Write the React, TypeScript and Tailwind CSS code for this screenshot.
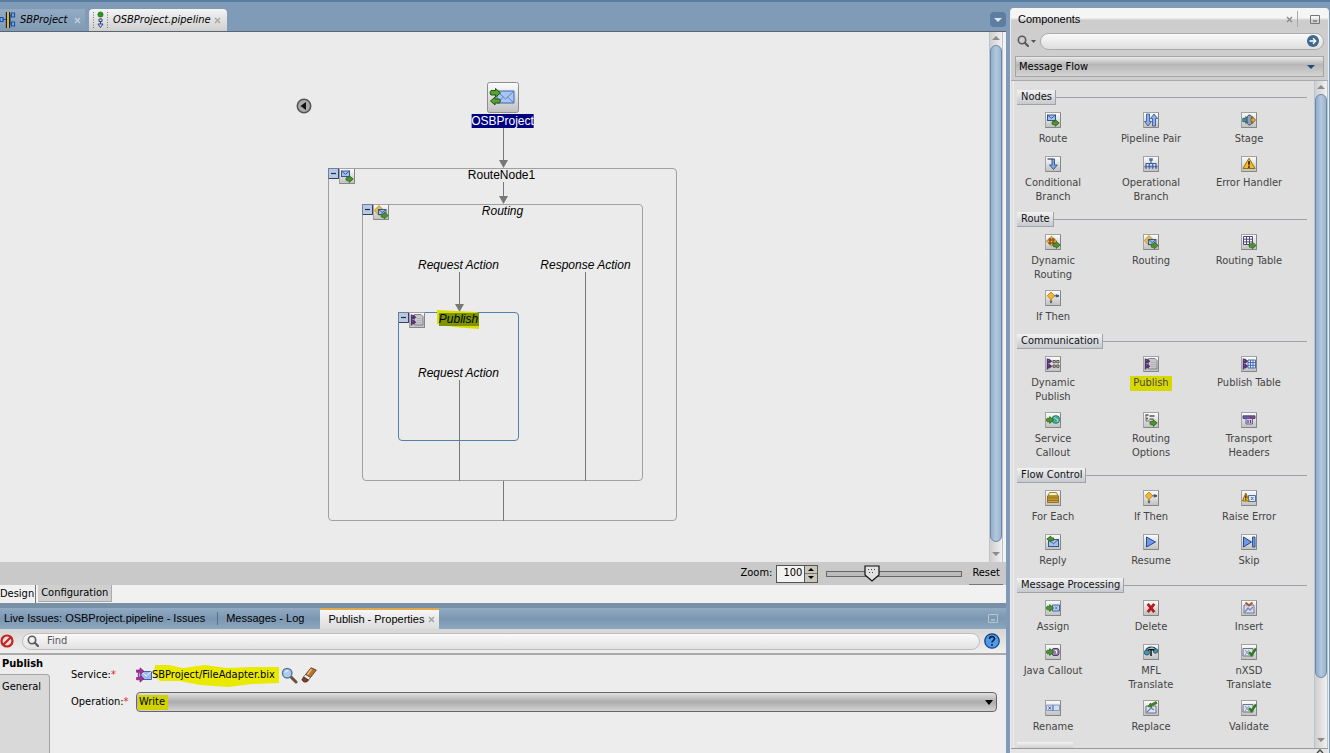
import React, { useState } from "react";

const UI = "font-['DejaVu_Sans_Condensed','DejaVu_Sans','Noto_Sans',sans-serif]";
const ARIAL = "font-['Liberation_Sans',Arial,sans-serif]";

type Glyph = React.ReactNode;

const greenArrow = (x: number, y: number) => (
  <path
    transform={`translate(${x} ${y})`}
    d="M.8 1.300h2.400V-.4L7.200 3l-4 3.400V4.800H.8C-.3 4.800-.3 1.300.8 1.300z"
    fill="#4d9430"
    stroke="#2c6418"
    strokeWidth=".8"
    strokeLinejoin="round"
  />
);
const purpleBolt = (
  <path d="M2.500 2.500v11M2 5.200h4M3.500 3.200l2.700 2-2.700 2M2 10.200h4M3.500 8.200l2.700 2-2.700 2" fill="none" stroke="#553070" strokeWidth="1.500" />
);
const envelope = (x: number, y: number, w: number, h: number) => (
  <g transform={`translate(${x} ${y})`}>
    <rect width={w} height={h} fill="#a4c1ee" stroke="#34568f" strokeWidth="1" />
    <path d={`M0 0L${w / 2} ${h * 0.6}L${w} 0`} fill="none" stroke="#34568f" strokeWidth=".9" />
  </g>
);
const check = <path d="M8 8l2.500 3L15 4.500" fill="none" stroke="#2c7d20" strokeWidth="2.400" />;
const ifThen = (
  <>
    <path d="M6 2L9.800 5.800 6 9.600 2.200 5.800z" fill="#f0b733" stroke="#b07d18" strokeWidth=".8" strokeLinejoin="round" />
    <path d="M9.500 5.800h2M6 9.500v3" stroke="#555" strokeWidth="1" />
    <path d="M10.800 4.300L14 5v1.800l-3.200.6zM4.500 11.300h3L6 13.800z" fill="#3d5680" />
    <path d="M6 10v2" stroke="#b56a20" strokeWidth="1.200" />
  </>
);

const glyphs: Record<string, Glyph> = {
  route: (
    <>
      {envelope(2.5, 3, 8, 5.5)}
      {greenArrow(7, 8)}
    </>
  ),
  pair: (
    <>
      <path d="M3.500 2h3v7.500H8.500L5 14 1.500 9.500h2z" fill="#8fb0e4" stroke="#3a5d9c" strokeWidth=".9" />
      <path d="M9.500 14h3V6.500h2L11 2 7.500 6.500h2z" fill="#8fb0e4" stroke="#3a5d9c" strokeWidth=".9" />
    </>
  ),
  stage: (
    <>
      <path d="M1.800 6.300h3V4.500l3 3.500-3 3.500V9.700h-3z" fill="#36969c" stroke="#1b5d66" strokeWidth=".8" />
      <ellipse cx="8.500" cy="8" rx="2.600" ry="5" fill="#8fa0bd" stroke="#394a62" strokeWidth="1" />
      <path d="M10 6.300h1.500V4.500l3 3.500-3 3.500V9.700H10z" fill="#d9a93c" stroke="#7a5a17" strokeWidth=".8" />
    </>
  ),
  cond: (
    <>
      <path d="M2.500 3h5" stroke="#222" strokeWidth="1.200" />
      <path d="M7 3h2.500v6h2.800L8.500 13.500 4.500 9H7z" fill="#7fa5df" stroke="#2c5090" strokeWidth=".9" />
    </>
  ),
  oper: (
    <>
      <path d="M8 4v4M3 11V7.500h10V11M6.300 11V8M9.700 11V8" fill="none" stroke="#3a5d9c" strokeWidth="1.100" />
      <path d="M6.500 2.500h3v2h-3zM1.500 10h3L3 13zM5 10h2.800L6.400 13zM8.300 10h2.800l-1.400 3zM11.500 10h3L13 13z" fill="#4a77c2" stroke="#24498f" strokeWidth=".4" />
    </>
  ),
  error: (
    <>
      <path d="M8 2.200L14 12.500H2z" fill="#f0bd28" stroke="#96700c" strokeWidth="1" strokeLinejoin="round" />
      <path d="M7 5.200h2L8.600 9.500H7.400zM7.100 10.200h1.800v1.500H7.100z" fill="#222" />
    </>
  ),
  dynRoute: (
    <>
      <path d="M6.500 2.200L11.800 7.200 6.500 12 1.500 7.200z" fill="#edb63c" stroke="#9a6b14" strokeWidth=".7" strokeLinejoin="round" />
      <path d="M4 4.800h2v2H4zM7.200 4.800h2v2h-2zM4 8h2v2H4zM7.200 8h2v2h-2z" fill="#c58a3c" stroke="#7a3a22" strokeWidth=".8" />
      {greenArrow(8, 8)}
    </>
  ),
  routing: (
    <>
      <path d="M6 1.500L11 6.500 6 11.500 1.200 6.500z" fill="#e9b944" stroke="#b4852a" strokeWidth=".8" strokeLinejoin="round" />
      {envelope(5.5, 5.5, 7.5, 5)}
      {greenArrow(8, 8.5)}
    </>
  ),
  routeTable: (
    <>
      <path d="M2.500 2.500h9v8h-9zM2.500 5.200h9M2.500 7.900h9M5.500 2.500v8M8.500 2.500v8" fill="#fff" stroke="#51457a" strokeWidth="1" />
      {greenArrow(8, 8.5)}
    </>
  ),
  ifThen,
  dynPublish: (
    <>
      {purpleBolt}
      <path d="M8 4.500h2.300v2.300H8zM11.700 4.500H14v2.300h-2.300zM8 9h2.300v2.300H8zM11.700 9H14v2.300h-2.300z" fill="#e2d8a8" stroke="#444" strokeWidth=".9" />
    </>
  ),
  publish: (
    <>
      <path d="M5.500 2.500h6.500L14 4.500V13H5.500z" fill="#c6c6cd" stroke="#77777f" strokeWidth=".9" />
      <path d="M8 6.500h4.500M8 8.500h4.500M8 10.500h4.500" stroke="#a9a9b2" strokeWidth=".7" />
      {purpleBolt}
    </>
  ),
  publishTable: (
    <>
      {purpleBolt}
      <path d="M7 4h7.500v8H7zM7 6.600h7.500M7 9.300h7.500M9.500 4v8M12 4v8" fill="#e8eefb" stroke="#3c62a8" strokeWidth=".9" />
    </>
  ),
  callout: (
    <>
      <circle cx="10.800" cy="7.500" r="3.900" fill="#45ab94" stroke="#1f6c7a" strokeWidth=".8" />
      <path d="M9.500 5.500c1.500 0 1 2 2.500 2s1 2 0 2.500" stroke="#c6f0e4" fill="none" strokeWidth=".9" />
      {greenArrow(1.5, 5)}
    </>
  ),
  options: (
    <>
      <path d="M2.500 3h3M6.500 4h5M3 6.500h2M6.500 7.200h4" stroke="#555" strokeWidth="1.300" />
      <path d="M3 3v6h4" fill="none" stroke="#666" strokeWidth=".9" />
      {greenArrow(7, 8)}
    </>
  ),
  headers: (
    <>
      <path d="M2 3.800h12v2.700H2z" fill="#7a5aa0" stroke="#3f2c6b" strokeWidth=".8" />
      <path d="M5 6.500h6.500V12H5z" fill="#c3d3f0" stroke="#3c62a8" strokeWidth=".9" />
      <path d="M9 4.500l2.500 2M7 8v3M9.500 8v3" stroke="#a32c3a" strokeWidth="1.200" />
    </>
  ),
  forEach: (
    <>
      <path d="M4.500 2.500h7l1.500 3.500H3z" fill="#fff0b8" stroke="#8b6a1b" strokeWidth=".8" />
      <path d="M2.500 6h11v6.500h-11z" fill="#d9a432" stroke="#8b6a1b" strokeWidth=".9" />
      <path d="M3 8h10M3 10.300h10" stroke="#7d5c12" strokeWidth=".9" />
    </>
  ),
  raise: (
    <>
      <path d="M7.500 5.500h7v6h-7z" fill="#dbe6f8" stroke="#3c62a8" strokeWidth=".9" />
      <path d="M10 7l2.500 3M12.500 7L10 10" stroke="#3c62a8" strokeWidth=".8" />
      <path d="M4.800 3L8.200 11H1.500z" fill="#f0bd28" stroke="#8a640a" strokeWidth=".9" />
      <path d="M4.800 5.500v3M4.800 9.200v1" stroke="#222" strokeWidth="1.200" />
    </>
  ),
  reply: (
    <>
      {envelope(3.5, 5.5, 10, 7)}
      <path d="M8.500 3.800H5.800V2L1.800 5l4 3V6.400h2.700z" fill="#4d9430" stroke="#2c6418" strokeWidth=".8" strokeLinejoin="round" />
    </>
  ),
  resume: <path d="M3.500 3l9 5-9 5z" fill="#6d9be6" stroke="#24498f" strokeWidth="1" strokeLinejoin="round" />,
  skip: (
    <>
      <path d="M2.500 3l8 5-8 5z" fill="#6d9be6" stroke="#24498f" strokeWidth="1" strokeLinejoin="round" />
      <path d="M11.500 3H14v10h-2.500z" fill="#6d9be6" stroke="#24498f" strokeWidth=".9" />
    </>
  ),
  assign: (
    <>
      <path d="M7.500 5h7v6h-7z" fill="#bfd5f5" stroke="#3c62a8" strokeWidth="1" />
      <path d="M10 6.500l2.500 3M12.500 6.500L10 9.500" stroke="#3c62a8" strokeWidth=".8" />
      {greenArrow(1.5, 5)}
    </>
  ),
  del: <path d="M4.700 3.800l6.600 8.400M11.300 3.800l-6.600 8.400" stroke="#b51c1c" strokeWidth="2.800" />,
  insert: (
    <>
      <path d="M3 5h10v8H3z" fill="#d7ddf0" stroke="#6a6f95" strokeWidth=".9" />
      <path d="M4 12l3-4 2 2 3-3" fill="none" stroke="#7a86b5" strokeWidth="1.400" />
      <path d="M4.500 2.500L8 5.500l3.500-3" fill="none" stroke="#a8572c" strokeWidth="1.900" />
    </>
  ),
  java: (
    <>
      <rect x="7" y="4.500" width="7" height="7" rx="2" fill="#9184a8" stroke="#4b3d6b" strokeWidth="1" />
      <path d="M10 6.500h1.500v3" fill="none" stroke="#fff" strokeWidth=".9" />
      {greenArrow(1.5, 5)}
    </>
  ),
  mfl: (
    <>
      <circle cx="3.900" cy="8.500" r="2.600" fill="#3a9aa8" stroke="#1b4d66" strokeWidth=".8" />
      <circle cx="12.500" cy="7" r="2.300" fill="#3a9aa8" stroke="#1b4d66" strokeWidth=".8" />
      <path d="M3 6c1.500-3.500 8-4 10-1" fill="none" stroke="#1b4d66" strokeWidth="1.200" />
      <path d="M5.500 5.500h5v1.300M5.500 5.500v1.300M8 5.500V12" stroke="#111" strokeWidth="1.500" fill="none" />
    </>
  ),
  validate: (
    <>
      <path d="M2 4.500h10V12H2z" fill="#dfe3ee" stroke="#6b7186" strokeWidth="1" />
      <path d="M4 6l4 5M8 6l-4 5" stroke="#8a93b3" strokeWidth="1" />
      {check}
    </>
  ),
  rename: (
    <>
      <path d="M1.500 5h13v5.500h-13z" fill="#d0dff6" stroke="#7f95bb" strokeWidth=".9" />
      <path d="M3.500 6.500l2.500 3M6 6.500l-2.500 3M8 5v5.500" stroke="#2f4f8f" strokeWidth=".9" />
    </>
  ),
  replace: (
    <>
      <path d="M3 6h10v7H3z" fill="#dfe4f0" stroke="#6b7186" strokeWidth="1" />
      <path d="M4 12l4-4 3 2" stroke="#6a7db0" strokeWidth="1.300" fill="none" />
      <path d="M13 1.500L7.500 4.500V3L5 6.500l4 .8-.8-1.300L14 3.500z" fill="#3c8f28" stroke="#2c6418" strokeWidth=".8" />
    </>
  ),
};

function NodeIcon({ name }: { name: string }) {
  return (
    <svg viewBox="0 0 16 16" className="block size-4 shrink-0" aria-hidden="true">
      <defs>
        <linearGradient id="tile" x1="0" y1="0" x2="0" y2="1">
          <stop offset="0" stopColor="#fdfdfd" />
          <stop offset="1" stopColor="#c0c0c0" />
        </linearGradient>
      </defs>
      <rect x=".5" y=".5" width="15" height="15" fill="url(#tile)" stroke="#a2a2a2" />
      <path d="M.5 15.500h15V1" fill="none" stroke="#868686" />
      {glyphs[name]}
    </svg>
  );
}

const groups: { title: string; items: [string, string[]][] }[] = [
  {
    title: "Nodes",
    items: [
      ["route", ["Route"]],
      ["pair", ["Pipeline Pair"]],
      ["stage", ["Stage"]],
      ["cond", ["Conditional", "Branch"]],
      ["oper", ["Operational", "Branch"]],
      ["error", ["Error Handler"]],
    ],
  },
  {
    title: "Route",
    items: [
      ["dynRoute", ["Dynamic", "Routing"]],
      ["routing", ["Routing"]],
      ["routeTable", ["Routing Table"]],
      ["ifThen", ["If Then"]],
    ],
  },
  {
    title: "Communication",
    items: [
      ["dynPublish", ["Dynamic", "Publish"]],
      ["publish", ["Publish"]],
      ["publishTable", ["Publish Table"]],
      ["callout", ["Service", "Callout"]],
      ["options", ["Routing", "Options"]],
      ["headers", ["Transport", "Headers"]],
    ],
  },
  {
    title: "Flow Control",
    items: [
      ["forEach", ["For Each"]],
      ["ifThen", ["If Then"]],
      ["raise", ["Raise Error"]],
      ["reply", ["Reply"]],
      ["resume", ["Resume"]],
      ["skip", ["Skip"]],
    ],
  },
  {
    title: "Message Processing",
    items: [
      ["assign", ["Assign"]],
      ["del", ["Delete"]],
      ["insert", ["Insert"]],
      ["java", ["Java Callout"]],
      ["mfl", ["MFL", "Translate"]],
      ["validate", ["nXSD", "Translate"]],
      ["rename", ["Rename"]],
      ["replace", ["Replace"]],
      ["validate", ["Validate"]],
    ],
  },
];

function Close({ className }: { className: string }) {
  return (
    <svg viewBox="0 0 7 7" className={`size-[7px] ${className}`} aria-hidden="true">
      <path d="M1 1l5 5M6 1L1 6" stroke="currentColor" strokeWidth="1.400" />
    </svg>
  );
}

function Minimize({ className }: { className: string }) {
  return (
    <svg viewBox="0 0 10 9" className={`h-[9px] w-[10px] ${className}`} aria-hidden="true">
      <path d="M.5.5h9v8h-9z" fill="none" stroke="currentColor" />
      <path d="M3 6h4" stroke="currentColor" strokeWidth="1.500" />
    </svg>
  );
}

function ScrollColumn({ tail }: { tail: string }) {
  return (
    <div className="flex w-[14px] shrink-0 flex-col items-center border-x border-[#b9c4cd] bg-linear-to-r from-[#cfcfcf] to-[#f0f0f0]" aria-hidden="true">
      <svg viewBox="0 0 8 13" className="h-[13px] w-2 shrink-0">
        <path d="M4 4l4 4H0z" fill="#8b8b8b" />
      </svg>
      <div className="w-3 flex-1 rounded-full border border-[#6b8aa8] bg-linear-to-r from-[#8fadcb] via-[#b4c8dd] to-[#9ab4ce]" />
      <div className={`flex shrink-0 items-end ${tail}`}>
        <svg viewBox="0 0 8 12" className="h-3 w-2">
          <path d="M4 6L0 2h8z" fill="#8b8b8b" />
        </svg>
      </div>
    </div>
  );
}

function Search({ className }: { className: string }) {
  return (
    <svg viewBox="0 0 12 12" className={className} aria-hidden="true">
      <circle cx="5" cy="5" r="3.700" fill="none" stroke="#5a5a5a" strokeWidth="1.600" />
      <path d="M7.800 7.800L11 11" stroke="#5a5a5a" strokeWidth="2.200" strokeLinecap="round" />
    </svg>
  );
}

function EditorTabs() {
  return (
    <div className={`flex h-6 shrink-0 items-end border-b border-[#5b6470] text-[11px] italic ${UI}`}>
      <button className="flex h-[22px] items-center bg-linear-to-b from-[#93abc3] to-[#7f9ab4] pr-1">
        <svg viewBox="0 0 16 16" className="size-4" aria-hidden="true">
          <path d="M0 5.500h3v4H0zM11.500 1h3v4h-3zM11.500 10h3v4h-3z" fill="#7fb0f0" stroke="#1c4fa0" strokeWidth="1.200" />
          <path d="M3 7.500h3M10 3h2M10 12h2M10 3v9" stroke="#1c4fa0" strokeWidth="1.200" />
          <path d="M6.500 0v16M9.500 0v16" stroke="#222" strokeWidth="1.300" />
          <path d="M8 0v16" stroke="#e8c33a" strokeWidth="1.500" />
        </svg>
        <span className="ml-1 w-[54px] text-left">SBProject</span>
        <Close className="text-[#c3d0dc]" />
      </button>
      <button className="ml-1 flex h-[22px] items-center rounded-t bg-linear-to-b from-[#f4f4f4] to-[#cfcfcf] pr-1.5 pl-[3px]">
        <svg viewBox="0 0 17 18" className="h-[18px] w-[17px]" aria-hidden="true">
          <path d="M1.500 1v16M15.500 1v16" stroke="#777" strokeDasharray="1 1.500" />
          <circle cx="8.500" cy="3.500" r="2.600" fill="#2a9a1f" stroke="#1a5e12" strokeWidth=".6" />
          <path d="M7 8h3v2.500H7zM8.500 11v2M6 13h5l-2.500 3.500z" fill="#dfe8fb" stroke="#28407e" />
        </svg>
        <span className="ml-1 w-[101px] text-left">OSBProject.pipeline</span>
        <Close className="text-[#a8a8a8]" />
      </button>
      <button aria-label="Open documents" className="mb-1 ml-auto flex h-[15px] w-4 items-center justify-center rounded-sm bg-[#5d7ea0]">
        <svg viewBox="0 0 8 4" className="h-1 w-2"><path d="M0 0h8L4 4z" fill="#dfe8f0" /></svg>
      </button>
    </div>
  );
}

function Collapse({ className }: { className: string }) {
  return (
    <button aria-label="Collapse" className={`absolute ${className}`}>
      <svg viewBox="0 0 11 11" className="block size-[11px]">
        <rect x=".5" y=".5" width="10" height="10" fill="#b9c9e2" stroke="#6c7f9f" />
        <path d="M1 10.500h9.500V1" fill="none" stroke="#33415c" />
        <path d="M3 5.500h5" stroke="#1f2f55" strokeWidth="1.200" />
      </svg>
    </button>
  );
}

const LABEL = `absolute -translate-x-1/2 whitespace-nowrap text-xs leading-[14px] text-black`;

function Diagram() {
  return (
    <div className={`relative h-[440px] w-[414px] shrink-0 ${ARIAL}`}>
      <div className="absolute top-[86px] left-8 h-[353px] w-[349px] rounded border border-[#a0a0a0]" />
      <div className="absolute top-[122px] left-[66px] h-[277px] w-[281px] rounded border border-[#a0a0a0]" />
      <div className="absolute top-[230px] left-[102px] h-[129px] w-[121px] rounded border border-[#5580ae]" />
      <svg viewBox="0 0 414 440" className="absolute inset-0 h-full w-full" aria-hidden="true">
        <path d="M207.500 46v36M207.500 100v18M163.500 190v36M163.500 298v101M289.500 190v209M207.500 399v40" stroke="#777" fill="none" />
        <path d="M203 78h9l-4.500 8zM203 114h9l-4.500 8zM159 222h9l-4.500 8z" fill="#777" />
        <path d="M141 228l39 2 3 1v16l-25-2-17-3z" fill="#dcdc00" />
        <path d="M143 231h40v13h-40z" fill="#7b9400" />
      </svg>
      <button aria-label="Back" className="absolute top-4 left-0">
        <svg viewBox="0 0 16 16" className="block size-4">
          <circle cx="8" cy="8" r="6.700" fill="#aaa" stroke="#555" strokeWidth="1.600" />
          <path d="M10 4v8L4.500 8z" fill="#111" />
        </svg>
      </button>
      <svg viewBox="0 0 32 31" className="absolute top-0 left-[191px] h-[31px] w-8" aria-hidden="true">
        <rect x=".5" y=".5" width="31" height="30" rx="2" fill="url(#tile)" stroke="#8d8d8d" />
        <path d="M10 9h17v12H10z" fill="#a9c6f2" stroke="#3f63a8" />
        <path d="M10 9l8.500 8L27 9M10 21l6.500-6M27 21l-6.500-6" fill="none" stroke="#5d80c0" />
        <path d="M4 8.500h4.500V6.500L13.500 11l-5 4v-2H4c-1.200-1-1.200-3.500 0-4.500z" fill="#54a52d" stroke="#24510f" />
        <path d="M12.500 17H8v-2l-4.500 4L8 23v-2h4.500c1-1 1-3 0-4z" fill="#54a52d" stroke="#24510f" />
      </svg>
      <span className={`${LABEL} top-8 left-[207px] bg-[#000080] text-white`}>OSBProject</span>
      <span className={`${LABEL} top-[86px] left-[206px]`}>RouteNode1</span>
      <span className={`${LABEL} top-[122px] left-[207px] italic`}>Routing</span>
      <span className={`${LABEL} top-44 left-[163px] italic`}>Request Action</span>
      <span className={`${LABEL} top-44 left-[290px] italic`}>Response Action</span>
      <span className={`${LABEL} top-[230px] left-[163px] italic`}>Publish</span>
      <span className={`${LABEL} top-[284px] left-[163px] italic`}>Request Action</span>
      <Collapse className="top-[86px] left-8" />
      <div className="absolute top-[86px] left-[43px]"><NodeIcon name="route" /></div>
      <Collapse className="top-[122px] left-[66px]" />
      <div className="absolute top-[122px] left-[77px]"><NodeIcon name="routing" /></div>
      <Collapse className="top-[230px] left-[102px]" />
      <div className="absolute top-[230px] left-[113px]"><NodeIcon name="publish" /></div>
    </div>
  );
}

function ZoomBar() {
  const [zoom, setZoom] = useState(100);
  return (
    <div className={`flex h-[23px] shrink-0 items-center justify-end bg-[#c9c9c9] text-[11px] text-black ${UI}`}>
      <label htmlFor="zoom-value">Zoom:</label>
      <div className="ml-1 flex h-[18px] border border-[#555]">
        <input
          id="zoom-value"
          value={zoom}
          onChange={(e) => setZoom(Number(e.target.value) || 0)}
          className="w-[27px] bg-[#f2f2f2] pr-0.5 text-right outline-none"
        />
        <div className="flex w-[13px] flex-col border-l border-[#555] bg-[#c9c6b8]">
          <button aria-label="Zoom in" onClick={() => setZoom(zoom + 10)} className="flex flex-1 items-center justify-center border-b border-[#777]">
            <svg viewBox="0 0 6 3" className="h-[3px] w-1.5"><path d="M0 3h6L3 0z" /></svg>
          </button>
          <button aria-label="Zoom out" onClick={() => setZoom(zoom - 10)} className="flex flex-1 items-center justify-center">
            <svg viewBox="0 0 6 3" className="h-[3px] w-1.5"><path d="M0 0h6L3 3z" /></svg>
          </button>
        </div>
      </div>
      <div className="relative ml-2 flex h-5 w-[136px] items-center">
        <div className="h-1.5 w-full border border-[#666] bg-[#bdbdbd]" />
        <svg viewBox="0 0 16 17" className="absolute top-px left-[38px] h-[17px] w-4" aria-hidden="true">
          <path d="M1 1h14v9l-7 6-7-6z" fill="#e2e2e2" stroke="#111" strokeWidth="1.200" />
          <path d="M4 4.500h8M5 7.500h6" stroke="#444" strokeDasharray="1 2" />
        </svg>
        <input
          type="range"
          aria-label="Zoom level"
          min={10}
          max={300}
          value={zoom}
          onChange={(e) => setZoom(Number(e.target.value))}
          className="absolute inset-0 w-full opacity-0"
        />
      </div>
      <button className="ml-[7px] h-full border-b border-[#777] px-[3px]">Reset</button>
      <div className="w-[3px]" />
    </div>
  );
}

function Properties() {
  return (
    <section className="flex h-[150px] shrink-0 flex-col border-t-[5px] border-[#7890a6]">
      <div className={`flex h-[21px] shrink-0 items-stretch bg-linear-to-b from-[#93abc4] via-[#7c97b1] to-[#8ca6bf] text-[11px] text-black ${ARIAL}`}>
        <button className="px-1">Live Issues: OSBProject.pipeline - Issues</button>
        <span className="my-1 ml-2 w-px bg-[#56718c]" />
        <button className="px-2">Messages - Log</button>
        <button className="ml-2 flex items-center gap-1 border-t-2 border-[#e3a84b] bg-linear-to-b from-[#f6f6f6] to-[#dcdcdc] pr-1 pl-2">
          Publish - Properties
          <Close className="text-[#a0a0a0]" />
        </button>
        <button aria-label="Minimize" className="mr-2 ml-auto text-[#b4c5d6]">
          <Minimize className="" />
        </button>
      </div>
      <div className="flex h-[26px] shrink-0 items-center border-b-2 border-[#a9a9a9] bg-linear-to-b from-[#d6d6d6] to-[#efefef]">
        <button aria-label="Clear">
          <svg viewBox="0 0 14 14" className="block size-[14px]">
            <circle cx="7" cy="7" r="5.500" fill="#f5dada" stroke="#c42222" strokeWidth="2.200" />
            <path d="M3 11l8-8" stroke="#c42222" strokeWidth="2.200" />
          </svg>
        </button>
        <div className="ml-2 flex h-[17px] flex-1 items-center rounded-full border border-[#bcbcbc] bg-linear-to-b from-[#fafafa] to-[#e2e2e2] pl-1">
          <Search className="size-3" />
          <input aria-label="Find" placeholder="Find" className={`ml-2 flex-1 bg-transparent text-[11px] outline-none placeholder:text-[#555] ${UI}`} />
        </div>
        <button aria-label="Help" className="mx-1">
          <svg viewBox="0 0 16 16" className="block size-4">
            <circle cx="8" cy="8" r="7.200" fill="#4f9be6" stroke="#143f86" strokeWidth="1.300" />
            <path d="M5.500 6c0-3.300 5-3.200 5-.2 0 1.900-2.500 1.700-2.500 3.700M8 11v1.800" fill="none" stroke="#0b2352" strokeWidth="1.700" />
          </svg>
        </button>
        <div className="w-0.5" />
      </div>
      <div className={`flex flex-1 bg-[#ededed] text-[11px] text-black ${UI}`}>
        <nav className="flex w-[50px] shrink-0 flex-col">
          <button className="h-[19px] pl-0.5 text-left font-bold">Publish</button>
          <button className="flex flex-1 items-start rounded-tr border-t border-r border-[#a5a5a5] bg-[#d9d9d9] pt-1 pl-0.5 text-left">General</button>
        </nav>
        <div className="flex flex-1 flex-col gap-[7px] pt-2.5 pr-[9px] pl-[21px]">
          <div className="flex h-5 items-center">
            <span className="w-[65px]">Service:<span className="text-[#d22]">*</span></span>
            <svg viewBox="0 0 16 16" className="size-4" aria-hidden="true">
              <path d="M5 4.500h10.500v8H5z" fill="#9dbaf0" stroke="#4464a5" />
              <path d="M5 4.500l5.200 4.500 5.300-4.500" fill="none" stroke="#e9f0ff" />
              <path d="M.5 3H4V.8l4 3.400-4 3.300V5.300H.5zM.5 10.500H4V8.300l4 3.400-4 3.500v-2.400H.5z" fill="#a5309a" stroke="#681563" strokeWidth=".6" />
              <path d="M2.500 5v6" stroke="#a5309a" strokeWidth="1.400" />
            </svg>
            <span className="relative isolate">
              <svg viewBox="0 0 130 24" preserveAspectRatio="none" className="absolute -top-1 left-0 -z-10 h-6 w-[130px]" aria-hidden="true">
                <path d="M3 2l14 0 14 3 22-3 22 3 24-1 28 0v16l-27 1-24 3-28-2-20-4-20 0-6-6z" fill="#eaea00" />
              </svg>
              SBProject/FileAdapter.bix
            </span>
            <button aria-label="Browse" className="ml-1.5">
              <svg viewBox="0 0 17 17" className="block size-[17px]">
                <path d="M10 10l5 5" stroke="#69513e" strokeWidth="3" strokeLinecap="round" />
                <circle cx="6.200" cy="6.200" r="4.700" fill="#a9cdf3" stroke="#5d7896" strokeWidth="1.500" />
                <path d="M4 5.500c.5-1.500 2-2 3-1.700" stroke="#fff" fill="none" />
              </svg>
            </button>
            <button aria-label="Clear service" className="ml-[3px]">
              <svg viewBox="0 0 16 16" className="block size-4">
                <path d="M10 .8L15.300 3 9.500 10.500 4.500 7.500z" fill="#c0702a" stroke="#4e2c10" strokeWidth=".8" />
                <path d="M4.500 7.500l5 3-2 2.500-5-3z" fill="#f3efe6" stroke="#444" strokeWidth=".7" />
                <path d="M2.500 10l5 3L5.800 15H3L.8 13z" fill="#8d3d22" stroke="#3c1a0d" strokeWidth=".7" />
                <path d="M10.500 2L6.500 7.500" stroke="#f2be82" strokeWidth="1.400" />
              </svg>
            </button>
          </div>
          <div className="flex h-5 items-center">
            <label htmlFor="operation" className="w-[65px]">Operation:<span className="text-[#d22]">*</span></label>
            <div className="relative isolate h-5 flex-1 rounded-sm border border-[#666] bg-linear-to-b from-[#e0e0e0] via-[#acacac] to-[#d4d4d4]">
              <span className="absolute top-0.5 left-px -z-10 h-[15px] w-[30px] bg-[#d2d200]" />
              <select id="operation" className="block h-full w-full appearance-none bg-transparent pl-0.5 outline-none">
                <option>Write</option>
              </select>
              <svg viewBox="0 0 8 5" className="pointer-events-none absolute top-[7px] right-[3px] h-[5px] w-2"><path d="M0 0h8L4 5z" /></svg>
            </div>
          </div>
        </div>
      </div>
    </section>
  );
}

function Components() {
  return (
    <aside className={`mt-1.5 flex w-[319px] shrink-0 flex-col overflow-hidden rounded-t border-x border-[#e9eef2] bg-[#dfdfdf] text-[11px] ${UI}`}>
      <div className="flex h-[22px] shrink-0 items-center bg-linear-to-b from-[#f5f5f5] from-45% to-[#cdcdcd] to-55% pr-2 pl-[7px] text-black">
        <h2 className={ARIAL}>Components</h2>
        <button aria-label="Close" className="ml-auto text-[#8a8a8a]"><Close className="" /></button>
        <span className="ml-1 h-4 w-px bg-[#aaa]" />
        <button aria-label="Minimize panel" className="ml-3 text-[#777]"><Minimize className="" /></button>
      </div>
      <div className="flex h-[51px] shrink-0 flex-col gap-1.5 border-b border-[#aaa] bg-[#cecece] px-1 pt-0.5">
        <div className="flex h-[18px] items-center">
          <Search className="ml-0.5 size-3" />
          <svg viewBox="0 0 5 3" className="ml-0.5 h-[3px] w-[5px]" aria-hidden="true"><path d="M0 0h5L2.500 3z" fill="#555" /></svg>
          <div className="ml-1 flex h-[17px] flex-1 items-center rounded-full border border-[#aaa] bg-linear-to-b from-[#fafafa] to-[#dedede] pr-1">
            <input aria-label="Search components" className="w-full bg-transparent pl-2 outline-none" />
            <button aria-label="Go">
              <svg viewBox="0 0 12 12" className="block size-3">
                <circle cx="6" cy="6" r="6" fill="#3f6890" />
                <path d="M2.500 6h6M6 3.300L8.700 6 6 8.700" fill="none" stroke="#fff" strokeWidth="1.400" />
              </svg>
            </button>
          </div>
        </div>
        <div className="relative h-[21px] border border-[#a5a5a5] bg-linear-to-b from-[#eaeaea] via-[#b7b7b7] via-40% to-[#d4d4d4]">
          <select aria-label="Component category" className="block h-full w-full appearance-none bg-transparent pt-px pl-[3px] text-black outline-none">
            <option>Message Flow</option>
          </select>
          <svg viewBox="0 0 8 4" className="pointer-events-none absolute top-2 right-2 h-1 w-2"><path d="M0 0h8L4 4z" fill="#254a78" /></svg>
        </div>
      </div>
      <div className="flex min-h-0 flex-1">
        <div className="ml-0.5 flex min-w-0 flex-1 flex-col gap-2 overflow-hidden border-l border-[#eee] pt-[9px] pl-[3px]">
          {groups.map((g) => (
            <section key={g.title}>
              <div className="flex h-[15px] items-center pr-[7px]">
                <h3 className="flex h-[15px] items-center border-r border-b border-[#a3a3a3] bg-linear-to-b from-[#f2f2f2] to-[#c6c9d0] pr-[3px] pl-1 text-[#111]">{g.title}</h3>
                <span className="h-px flex-1 bg-[#9da1a8]" />
              </div>
              <div className="mt-[7px] -ml-0.5 grid grid-cols-[76px_76px_76px] gap-x-[22px] gap-y-2">
                {g.items.map(([icon, lines], i) => (
                  <button key={i} className="flex flex-col items-center gap-1 text-[#444]">
                    <NodeIcon name={icon} />
                    <span className="min-h-4 leading-[14px]">
                      {lines.map((l) => (
                        <span
                          key={l}
                          className={
                            icon === "publish"
                              ? "block bg-[#d8d800] px-[3px] pb-px"
                              : "block whitespace-nowrap"
                          }
                        >
                          {l}
                        </span>
                      ))}
                    </span>
                  </button>
                ))}
              </div>
            </section>
          ))}
          <div className="-mt-0.5 h-1.5 w-14 shrink-0 bg-linear-to-b from-[#f2f2f2] to-[#d0d0d0]" />
        </div>
        <ScrollColumn tail="h-[70px]" />
      </div>
      <div className="flex h-[5px] shrink-0 justify-end border-t border-[#999] bg-[#e6e6e6] pr-1">
        <svg viewBox="0 0 8 4" className="h-1 w-2" aria-hidden="true"><path d="M1 4l3-3 3 3" fill="none" stroke="#444" strokeWidth="1.400" /></svg>
      </div>
    </aside>
  );
}

export default function App() {
  return (
    <div className="flex h-screen gap-1 border-t-2 border-[#5a7da2] bg-[#7f9bb7] pr-px">
      <main className="flex min-w-0 flex-1 flex-col pt-[6px]">
        <EditorTabs />
        <div className="flex min-h-0 flex-1 bg-[#ebebeb]">
          <div className="flex min-w-0 flex-1 justify-center overflow-hidden pt-[50px] pl-4">
            <Diagram />
          </div>
          <ScrollColumn tail="h-5" />
          <div className="w-[3px] shrink-0 bg-[#f2f2f2]" />
        </div>
        <ZoomBar />
        <div className={`flex h-[18px] shrink-0 bg-[#f1f1f1] text-[11px] text-black ${UI}`}>
          <button className="border-r border-[#777] pr-px">Design</button>
          <button className="ml-0.5 h-[17px] border-r border-b border-[#aaa] bg-[#cfcfcf] px-[3px]">Configuration</button>
        </div>
        <Properties />
      </main>
      <Components />
    </div>
  );
}
